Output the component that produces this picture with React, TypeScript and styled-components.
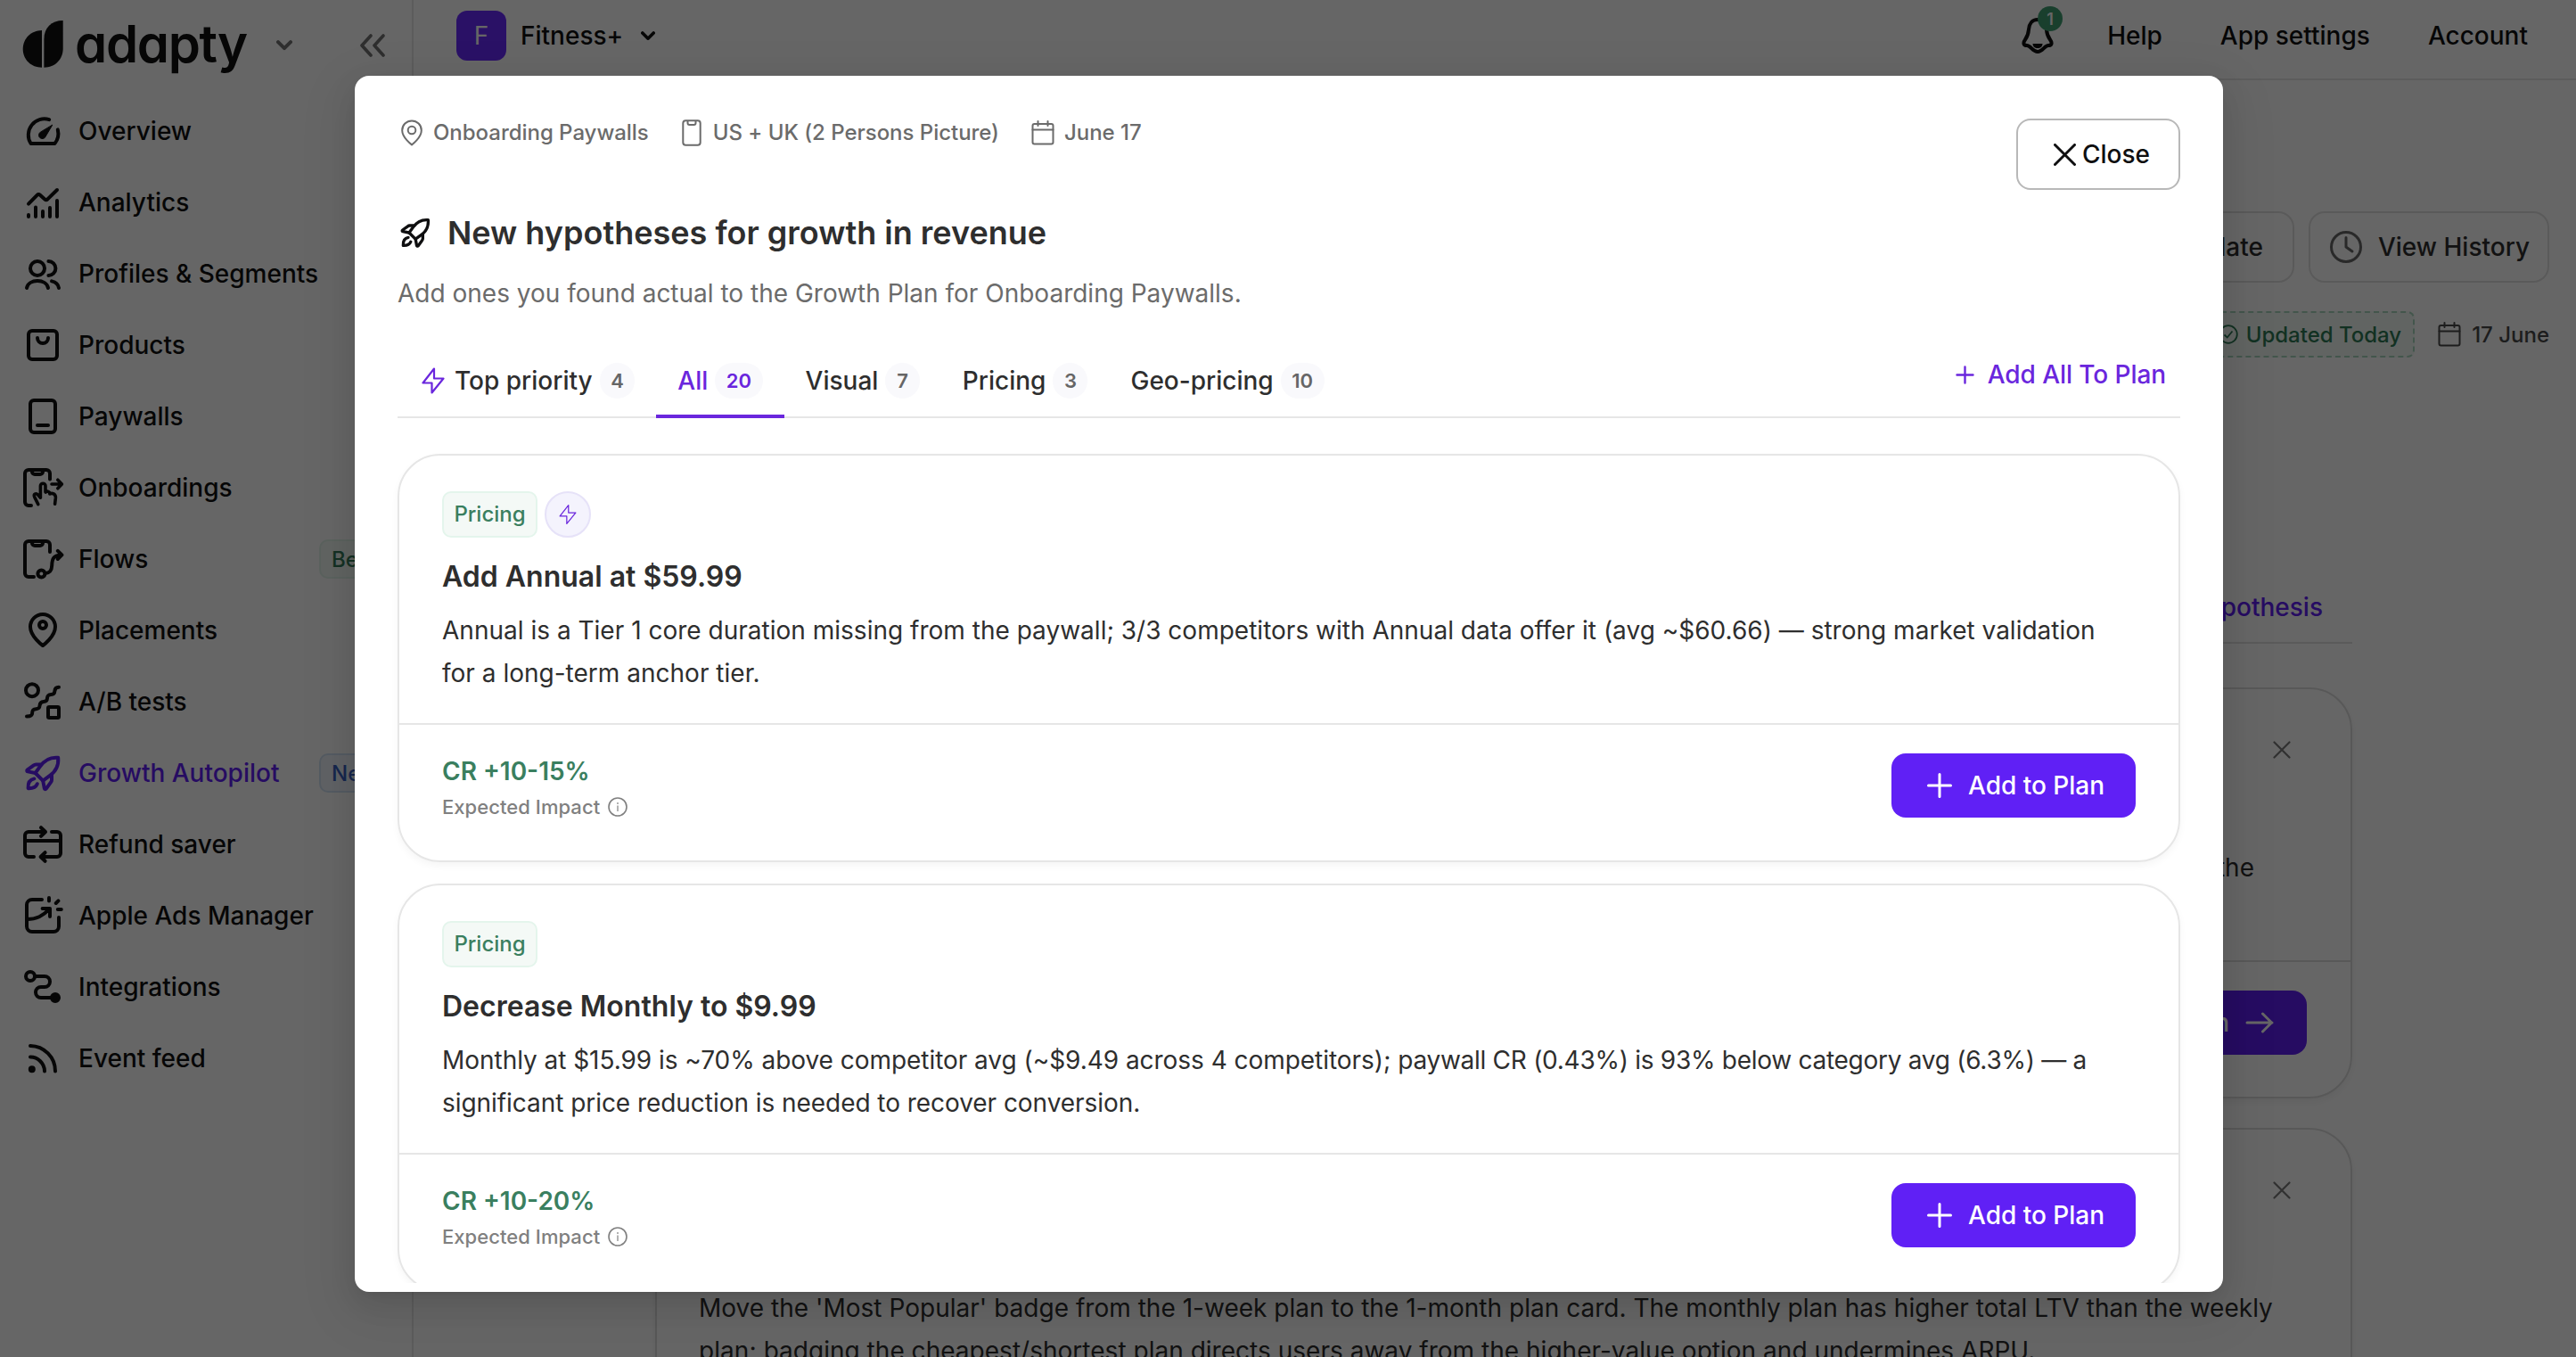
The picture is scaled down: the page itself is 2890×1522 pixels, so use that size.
import React from 'react';
import styled, { createGlobalStyle, css } from 'styled-components';

const GlobalStyle = createGlobalStyle`
  *, *::before, *::after { box-sizing: border-box; }
  html, body { margin: 0; padding: 0; }
  body {
    background: #fff;
    color: #0f0f10;
    font-family: Inter, 'Liberation Sans', sans-serif;
    font-size: 28px;
    font-weight: 500;
    font-optical-sizing: none;
    overflow: hidden;
  }
  button { font: inherit; letter-spacing: inherit; color: inherit; background: none; border: 0; padding: 0; margin: 0; }
  h1, h2, p { margin: 0; }
  svg { display: block; flex: none; }
`;

/* ---------- Icons ---------- */

type GlyphProps = {
  size?: number;
  width?: number;
  children: React.ReactNode;
};

const Glyph = ({ size = 48, width = 2, children }: GlyphProps) => (
  <svg
    width={size}
    height={size}
    viewBox="0 0 24 24"
    fill="none"
    stroke="currentColor"
    strokeWidth={width}
    strokeLinecap="round"
    strokeLinejoin="round"
  >
    {children}
  </svg>
);

const rocket = (
  <>
    <path d="M20.6 3.4C16.4 3 13 4.7 10.5 8.3L7.8 12l4.3 4.3 3.7-2.7c3.6-2.5 5.2-6 4.8-10.2Z" />
    <path d="M10.8 7.2H8.2c-.5 0-1 .2-1.3.5L3.4 10.2c-.5.4-.3.9.2 1L7.8 12" />
    <path d="M17 13.2v2.7c0 .5-.2 1-.5 1.3l-2.6 3.6c-.4.5-.9.3-1-.2l-.8-4.3" />
    <path d="M7.2 15.2c-2.3.4-3.6 2.2-3.4 5.4 2.4.1 4.3-.6 5.1-2.5" />
  </>
);

const phoneNotch = <path d="M6 2.3v.7A1.5 1.5 0 0 0 7.5 4.5h3A1.5 1.5 0 0 0 12 3v-.7" />;

const icons = {
  overview: (
    <>
      <path d="M15.6 5.6A9 9 0 0 0 5.3 19h13.4a9 9 0 0 0 1.7-7.8" />
      <path
        d="M17.3 8.7 13.6 15a2 2 0 1 1-3.1-2.3Z"
        fill="currentColor"
        strokeWidth="0.5"
      />
    </>
  ),
  analytics: (
    <>
      <path d="m4 12.8 4.8-4.9a1.2 1.2 0 0 1 1.7 0l2.6 2.3a1.2 1.2 0 0 0 1.6 0L20 5" />
      <path d="M4 19v1M8 14.8V20M12 17v3M16 15v5M20 11v9" />
    </>
  ),
  profiles: (
    <>
      <circle cx="9" cy="9" r="4" />
      <path d="M15.2 5a4 4 0 0 1 0 8M3 20c.5-2.5 3-4 6-4s5.5 1.5 6 4M17 16.2c2.2.5 3.7 1.8 4 3.8" />
    </>
  ),
  products: (
    <>
      <rect x="4" y="4" width="16" height="16" rx="2" />
      <path d="M9 8a3 3 0 0 0 6 0" />
    </>
  ),
  paywalls: (
    <>
      <rect x="5" y="3" width="14" height="18" rx="2" />
      <path d="M9 17h6" />
    </>
  ),
  onboardings: (
    <>
      {phoneNotch}
      <path d="M5.5 22H4a2 2 0 0 1-2-2V4a2 2 0 0 1 2-2h10a2 2 0 0 1 2 2v3.3" />
      <path d="M17 10h5.4M20.4 7.6l2.3 2.4-2.3 2.4" strokeWidth="1.8" />
      <path
        d="m9.4 21.3-2-4c-.8-1.7.8-2.5 1.9-1.3l1.4 1.6V11a1.4 1.4 0 0 1 2.8 0v3.3M13.5 14.5c1-.8 2.4-.4 2.4 1 1.3-.8 3.4 0 3.3 2.1l-.4 3.5"
        strokeWidth="1.8"
      />
    </>
  ),
  flows: (
    <>
      {phoneNotch}
      <path d="M7 22H4a2 2 0 0 1-2-2V4a2 2 0 0 1 2-2h10a2 2 0 0 1 2 2v4" />
      <circle cx="11.2" cy="20.2" r="2" />
      <path d="M13.4 20c2.8-.3 3.6-1.6 3.7-4.3.1-4 .9-5.6 5-6M20.4 7.4l2.3 2.3-2.3 2.3" />
    </>
  ),
  placements: (
    <>
      <path d="M12 20.5S5 15.5 5 10a7 7 0 0 1 14 0c0 5.5-7 10.5-7 10.5Z" />
      <circle cx="12" cy="9" r="2" />
    </>
  ),
  abTests: (
    <>
      <circle cx="6" cy="5.6" r="3.5" />
      <rect x="15" y="15" width="6" height="6" rx="0.6" />
      <path d="M3 20.2c2.4 0 3.1-.5 3.1-2s.6-2 2.1-2.1 2-.6 2.1-2 .6-2 2.1-2.1 2-.6 2.1-2 .6-1.9 2.1-2 2-.6 2.1-2 .8-2.1 2.3-2.1" />
    </>
  ),
  growth: rocket,
  refund: (
    <>
      <path d="M7 19H4a2 2 0 0 1-2-2V7a2 2 0 0 1 2-2h9.4M11 2.6 13.5 5 11 7.4" />
      <path d="M17 5h3a2 2 0 0 1 2 2v10a2 2 0 0 1-2 2h-9M13.3 16.6 10.8 19l2.5 2.4M2 10h20" />
    </>
  ),
  ads: (
    <>
      <path d="M11.5 3H6a3 3 0 0 0-3 3v12a3 3 0 0 0 3 3h12a3 3 0 0 0 3-3v-5" />
      <path d="M3 14c5.5 0 9-1.8 12.8-5.8M11.8 8H16v4.5M15.5 2v1.7M20.7 3.7l-1.3 1.3M20.4 8.5h2" />
    </>
  ),
  integrations: (
    <>
      <circle cx="5" cy="6" r="2.5" />
      <path d="M7.5 6H13a3 3 0 0 1 0 6h-2a3 3 0 0 0 0 6h6" />
      <circle cx="19" cy="18" r="2" fill="currentColor" />
    </>
  ),
  feed: (
    <>
      <circle cx="5.9" cy="18.1" r="1" fill="currentColor" />
      <path d="M5 11.3a8 8 0 0 1 8 7.9M5 5a14.2 14.2 0 0 1 14 14.2" />
    </>
  ),
};

const Pin = () => (
  <svg width="24" height="30" viewBox="0 0 24 30" fill="none" stroke="currentColor" strokeWidth="2" strokeLinejoin="round">
    <path d="M12 28.4S1.2 20.5 1.2 12.2a10.8 10.8 0 0 1 21.6 0C22.8 20.5 12 28.4 12 28.4Z" />
    <circle cx="12" cy="12" r="4.3" />
  </svg>
);

const Phone = () => (
  <svg width="22" height="30" viewBox="0 0 22 30" fill="none" stroke="currentColor" strokeWidth="2" strokeLinejoin="round">
    <rect x="1.3" y="1.3" width="19.4" height="27.4" rx="3" />
    <path d="M6.5 1.5V4a2 2 0 0 0 2 2h5a2 2 0 0 0 2-2V1.5" />
  </svg>
);

const Calendar = () => (
  <svg width="26" height="28" viewBox="0 0 26 28" fill="none" stroke="currentColor" strokeWidth="2" strokeLinejoin="round" strokeLinecap="round">
    <rect x="1.5" y="4" width="23" height="22.5" rx="2" />
    <path d="M1.5 10.5h23M7.5 1v5M18.5 1v5" />
  </svg>
);

const Bolt = ({ w, h, stroke }: { w: number; h: number; stroke: number }) => (
  <svg width={w} height={h} viewBox="0 0 26 30" fill="none" stroke="currentColor" strokeWidth={stroke} strokeLinejoin="round">
    <path d="M14 1.5 1.5 17.5H11.5L11.5 28.5 24.5 12.5H14Z" />
  </svg>
);

const Plus = ({ size, stroke }: { size: number; stroke: number }) => (
  <svg width={size} height={size} viewBox={`0 0 ${size} ${size}`} fill="none" stroke="currentColor" strokeWidth={stroke} strokeLinecap="round">
    <path d={`M${size / 2} 1.5V${size - 1.5}M1.5 ${size / 2}H${size - 1.5}`} />
  </svg>
);

const Cross = ({ size, stroke }: { size: number; stroke: number }) => (
  <svg width={size} height={size} viewBox={`0 0 ${size} ${size}`} fill="none" stroke="currentColor" strokeWidth={stroke} strokeLinecap="round">
    <path d={`M1.5 1.5 ${size - 1.5} ${size - 1.5}M${size - 1.5} 1.5 1.5 ${size - 1.5}`} />
  </svg>
);

const Chevron = ({ size }: { size: number }) => (
  <svg width={size} height={(size * 12) / 18} viewBox="0 0 18 12" fill="none" stroke="currentColor" strokeWidth="4" strokeLinecap="round" strokeLinejoin="round">
    <path d="m2 2.2 7 7 7-7" />
  </svg>
);

const Info = () => (
  <svg width="22" height="22" viewBox="0 0 22 22" fill="none" stroke="currentColor" strokeWidth="1.6">
    <circle cx="11" cy="11" r="10" />
    <path d="M11 9.5v6.5M11 6v2" strokeWidth="1.2" />
  </svg>
);

/* ---------- Page shell ---------- */

const Page = styled.div`
  display: flex;
  width: 2890px;
  height: 1522px;
  overflow: hidden;
  position: relative;
`;

const Sidebar = styled.aside`
  width: 464px;
  flex: none;
  border-right: 2px solid #e6e6e6;
  display: flex;
  flex-direction: column;
`;

const Brand = styled.div`
  height: 107px;
  padding: 0 29px 6px 24px;
  display: flex;
  align-items: center;
  color: #737373;
`;

const Wordmark = styled.span`
  margin-left: 12px;
  margin-top: -3px;
  width: 193px;
  font-size: 58px;
  line-height: 70px;
  font-weight: 600;
  letter-spacing: -1.3px;
  font-feature-settings: 'cv11' 1;
  color: #0f0f10;
  white-space: nowrap;
`;

const BrandChevron = styled.span`
  margin-left: 33px;
`;

const Collapse = styled.span`
  margin-left: auto;
`;

const NavItem = styled.a<{ $active?: boolean }>`
  height: 80px;
  padding-left: 24px;
  display: flex;
  align-items: center;
  white-space: nowrap;
  color: ${(p) => (p.$active ? '#5f20f4' : '#0f0f10')};
`;

const NavLabel = styled.span`
  margin-left: 16px;
  width: 270px;
`;

const NavBadge = styled.span<{ $tone: 'green' | 'blue' }>`
  height: 44px;
  padding: 0 12px;
  display: flex;
  align-items: center;
  border: 2px solid;
  border-radius: 10px;
  font-size: 24px;
  ${(p) =>
    p.$tone === 'green'
      ? css`
          color: #357c5a;
          background: #f2faf6;
          border-color: #e3f4ea;
        `
      : css`
          color: #3a62c4;
          background: #f0f6fd;
          border-color: #d3e4f5;
        `}
`;

const Main = styled.div`
  flex: 1;
  min-width: 0;
  display: flex;
  flex-direction: column;
`;

const TopBar = styled.header`
  height: 90px;
  flex: none;
  padding: 0 54px 8px 48px;
  border-bottom: 2px solid #e6e6e6;
  display: flex;
  align-items: center;
`;

const AppMark = styled.span`
  width: 56px;
  height: 56px;
  border-radius: 12px;
  background: #6a2bff;
  color: #fff;
  display: flex;
  align-items: center;
  justify-content: center;
  font-weight: 400;
`;

const AppName = styled.span`
  margin: 0 20px 0 16px;
`;

const TopLinks = styled.nav`
  margin-left: auto;
  display: flex;
  align-items: center;
  gap: 65px;
`;

const Bell = styled.span`
  position: relative;
  margin-right: -7px;
`;

const BellCount = styled.span`
  position: absolute;
  left: 20px;
  top: -11px;
  width: 28px;
  height: 28px;
  border-radius: 50%;
  background: #3f9e72;
  color: #fff;
  font-size: 18px;
  font-weight: 600;
  display: flex;
  align-items: center;
  justify-content: center;
`;

const Actions = styled.div`
  margin: 147px 30px 0 0;
  display: flex;
  justify-content: flex-end;
  gap: 16px;
`;

const GhostButton = styled.button`
  height: 80px;
  padding: 0 20px 0 21px;
  border: 2px solid #e2e2e2;
  border-radius: 18px;
  display: flex;
  align-items: center;
  gap: 17px;
  color: #2e2e2e;
`;

const ClockSlot = styled.span`
  color: #666;
`;

const UpdateButton = styled(GhostButton)`
  padding: 0 33px;
`;

const StatusRow = styled.div`
  margin: 32px 30px 0 0;
  height: 52px;
  display: flex;
  justify-content: flex-end;
  align-items: center;
  font-size: 24px;
`;

const FreshBadge = styled.span`
  height: 52px;
  padding: 0 13px;
  border: 2px dashed #a9d6bf;
  border-radius: 8px;
  background: #f2faf6;
  color: #2f7a56;
  display: flex;
  align-items: center;
  gap: 9px;
`;

const DateNote = styled.span`
  margin-left: 26px;
  display: flex;
  align-items: center;
  gap: 12px;
  color: #4a4a4a;
`;

const PlanColumn = styled.section`
  margin: 239px 0 0 271px;
  width: 1904px;
  display: flex;
  flex-direction: column;
`;

const PlanBar = styled.div`
  height: 82px;
  padding: 0 33px 0 0;
  border-bottom: 2px solid #e2e2e2;
  display: flex;
  justify-content: flex-end;
  color: #5f20f4;
  line-height: 82px;
`;

const PlanCard = styled.article`
  margin-top: 49px;
  height: 461px;
  flex: none;
  border: 2px solid #dddddd;
  border-radius: 48px;
  box-shadow: 0 4px 8px rgba(0, 0, 0, 0.05);

  & + & { margin-top: 33px; }
`;

const PlanBody = styled.div`
  height: 306px;
  border-bottom: 2px solid #dddddd;
  padding: 57px 67px 0 47px;
`;

const Dismiss = styled.div`
  height: 120px;
  padding-top: 1px;
  display: flex;
  justify-content: flex-end;
  color: #7a7a7a;
`;

const PlanText = styled.p<{ $right?: boolean }>`
  font-weight: 400;
  line-height: 47.5px;
  letter-spacing: 0.02px;
  white-space: pre;
  color: #2e2e2e;
  text-align: ${(p) => (p.$right ? 'right' : 'left')};
  padding-right: ${(p) => (p.$right ? '41px' : '0')};
`;

const PlanFooter = styled.div`
  padding: 32px 49px 0;
  display: flex;
  justify-content: flex-end;
`;

const PrimaryButton = styled.button`
  height: 72px;
  padding: 0 37px 0 40px;
  border-radius: 16px;
  background: #6020f5;
  color: #fff;
  display: flex;
  align-items: center;
  gap: 18px;
  white-space: nowrap;
`;

/* ---------- Modal ---------- */

const Overlay = styled.div`
  position: absolute;
  inset: 0;
  padding: 85px 396px 73px 398px;
  background: rgba(0, 0, 0, 0.6);
  display: flex;
`;

const Dialog = styled.div`
  flex: 1;
  min-width: 0;
  padding: 48px 48px 10px;
  border-radius: 16px;
  background: #fff;
  box-shadow: 0 12px 32px rgba(0, 0, 0, 0.09), 0 6px 12px -8px rgba(0, 0, 0, 0.12),
    0 18px 56px 16px rgba(0, 0, 0, 0.06);
  display: flex;
  flex-direction: column;
`;

const DialogTop = styled.div`
  display: flex;
  justify-content: space-between;
  align-items: flex-start;
  height: 80px;
`;

const MetaList = styled.div`
  height: 31px;
  display: flex;
  align-items: center;
  color: #6b6b6b;
  font-size: 24px;
  letter-spacing: -0.03px;
`;

const MetaItem = styled.span<{ $gap: number; $lead: number }>`
  display: flex;
  align-items: center;
  gap: ${(p) => p.$gap}px;
  margin-left: ${(p) => p.$lead}px;
  white-space: nowrap;
`;

const CloseButton = styled.button`
  width: 184px;
  height: 80px;
  border: 2px solid #b8b8b8;
  border-radius: 16px;
  padding-left: 40px;
  display: flex;
  align-items: center;
  gap: 7px;
`;

const Heading = styled.h1`
  margin-top: 24px;
  height: 48px;
  display: flex;
  align-items: center;
  gap: 16px;
  font-size: 36px;
  font-weight: 600;
  color: #2e2e2e;
  svg { color: #0f0f10; }
`;

const Sub = styled.p`
  margin-top: 24px;
  height: 40px;
  line-height: 40px;
  font-weight: 400;
  color: #6b6b6b;
`;

const TabBar = styled.div`
  margin-top: 36px;
  height: 84px;
  flex: none;
  border-bottom: 2px solid #e6e6e6;
  display: flex;
  align-items: stretch;
  color: #2e2e2e;
`;

const Tab = styled.button<{ $active?: boolean }>`
  padding: 4px 24px 0;
  margin-bottom: -2px;
  border-bottom: 4px solid ${(p) => (p.$active ? '#6a26dd' : 'transparent')};
  color: ${(p) => (p.$active ? '#6a26dd' : '#2e2e2e')};
  display: flex;
  align-items: center;
  gap: 8px;
  white-space: nowrap;
`;

const Count = styled.span<{ $active?: boolean }>`
  height: 40px;
  min-width: 38.5px;
  padding: 0 12.5px;
  border-radius: 20px;
  background: #f9f9fc;
  color: ${(p) => (p.$active ? '#6a26dd' : '#666')};
  font-size: 22px;
  font-weight: 600;
  display: flex;
  align-items: center;
  justify-content: center;
`;

const BoltSlot = styled.span`
  color: #6a26dd;
  margin: 0 3px;
`;

const AddAll = styled.button`
  margin-left: auto;
  padding: 0 16px 12px 0;
  display: flex;
  align-items: center;
  gap: 15px;
  letter-spacing: -0.08px;
  color: #6a26dd;
`;

const Scroller = styled.div`
  flex: 1;
  min-height: 0;
  margin: 0 -16px;
  padding: 40px 16px 0;
  overflow: hidden;
  display: flex;
  flex-direction: column;
  gap: 24px;
`;

const Card = styled.article`
  height: 458px;
  flex: none;
  border: 2px solid #e6e6e6;
  border-radius: 48px;
  box-shadow: 0 4px 8px rgba(0, 0, 0, 0.04);
`;

const CardBody = styled.div`
  height: 302px;
  padding: 40px 48px 0;
  border-bottom: 2px solid #e6e6e6;
`;

const Tags = styled.div`
  display: flex;
  gap: 8px;
`;

const Tag = styled.span`
  width: 107px;
  height: 52px;
  padding-bottom: 1px;
  border: 2px solid #e4f5ec;
  border-radius: 10px;
  background: #f4f9f6;
  color: #3a7f5f;
  font-size: 24px;
  display: flex;
  align-items: center;
  justify-content: center;
`;

const PriorityMark = styled.span`
  width: 52px;
  height: 52px;
  border: 2px solid #e6e2f8;
  border-radius: 50%;
  background: #f4f3fd;
  color: #6a26dd;
  display: flex;
  align-items: center;
  justify-content: center;
`;

const CardTitle = styled.h2`
  margin-top: 20px;
  font-size: 32px;
  line-height: 48px;
  font-weight: 600;
  color: #2e2e2e;
`;

const CardText = styled.p`
  margin-top: 12px;
  font-weight: 400;
  line-height: 48px;
  color: #2e2e2e;
  white-space: pre;
`;

const Run = styled.span<{ $tracking: number }>`
  letter-spacing: ${(p) => p.$tracking}px;
`;

const CardFooter = styled.div`
  padding: 32px 48px 0;
  display: flex;
  justify-content: space-between;
  align-items: flex-start;
`;

const Impact = styled.div`
  color: #3a7f5f;
  font-weight: 600;
  line-height: 40px;
`;

const ImpactLabel = styled.div`
  height: 40px;
  display: flex;
  align-items: center;
  gap: 9px;
  font-size: 22px;
  letter-spacing: 0.05px;
  font-weight: 500;
  color: #808080;
`;

const AddButton = styled(PrimaryButton)`
  width: 274px;
`;

/* ---------- Data ---------- */

type NavEntry = {
  label: string;
  icon: keyof typeof icons;
  badge?: { text: string; tone: 'green' | 'blue' };
  active?: boolean;
};

const nav: NavEntry[] = [
  { label: 'Overview', icon: 'overview' },
  { label: 'Analytics', icon: 'analytics' },
  { label: 'Profiles & Segments', icon: 'profiles' },
  { label: 'Products', icon: 'products' },
  { label: 'Paywalls', icon: 'paywalls' },
  { label: 'Onboardings', icon: 'onboardings' },
  { label: 'Flows', icon: 'flows', badge: { text: 'Beta', tone: 'green' } },
  { label: 'Placements', icon: 'placements' },
  { label: 'A/B tests', icon: 'abTests' },
  { label: 'Growth Autopilot', icon: 'growth', badge: { text: 'New', tone: 'blue' }, active: true },
  { label: 'Refund saver', icon: 'refund' },
  { label: 'Apple Ads Manager', icon: 'ads' },
  { label: 'Integrations', icon: 'integrations' },
  { label: 'Event feed', icon: 'feed' },
];

const tabs = [
  { label: 'Top priority', count: 4, bolt: true },
  { label: 'All', count: 20, active: true },
  { label: 'Visual', count: 7 },
  { label: 'Pricing', count: 3 },
  { label: 'Geo-pricing', count: 10 },
];

const hypotheses = [
  {
    title: 'Add Annual at $59.99',
    runs: [
      {
        text: 'Annual is a Tier 1 core duration missing from the paywall; 3/3 competitors with Annual data offer it (avg ~$60.66) — strong market validation\nfor a long-term anchor tier.',
        tracking: 0.01,
      },
    ],
    impact: 'CR +10-15%',
    priority: true,
  },
  {
    title: 'Decrease Monthly to $9.99',
    runs: [
      {
        text: 'Monthly at $15.99 is ~70% above competitor avg (~$9.49 across 4 competitors); ',
        tracking: -0.04,
      },
      { text: 'paywall CR (0.43%) is 93% below category avg (6.3%) — a\n', tracking: -0.27 },
      { text: 'significant price reduction is needed to recover conversion.', tracking: -0.05 },
    ],
    impact: 'CR +10-20%',
    priority: false,
  },
];

/* ---------- Sections ---------- */

const SidebarPanel = () => (
  <Sidebar>
    <Brand>
      <svg width="48" height="56" viewBox="24 19 48 56" fill="#0f0f10">
        <path d="M47 30v41.7C35 71.7 25.7 63 25.7 51S35 30.3 47 30Z" />
        <path d="M70.7 19v31.5c0 12-9 21.2-21.3 21.2V40C49.4 27 57.5 19 70.7 19Z" />
      </svg>
      <Wordmark>adapty</Wordmark>
      <BrandChevron>
        <Chevron size={18} />
      </BrandChevron>
      <Collapse>
        <svg width="30" height="26" viewBox="0 0 30 26" fill="none" stroke="currentColor" strokeWidth="3.6" strokeLinecap="round" strokeLinejoin="round">
          <path d="M13 2 3 13l10 11M27 2 17 13l10 11" />
        </svg>
      </Collapse>
    </Brand>
    {nav.map((n) => (
      <NavItem key={n.label} $active={n.active}>
        <Glyph>{icons[n.icon]}</Glyph>
        <NavLabel>{n.label}</NavLabel>
        {n.badge && <NavBadge $tone={n.badge.tone}>{n.badge.text}</NavBadge>}
      </NavItem>
    ))}
  </Sidebar>
);

const MainPanel = () => (
  <Main>
    <TopBar>
      <AppMark>F</AppMark>
      <AppName>Fitness+</AppName>
      <Chevron size={16} />
      <TopLinks>
        <Bell>
          <svg width="40" height="44" viewBox="0 0 40 44" fill="none" stroke="currentColor" strokeWidth="4" strokeLinejoin="round">
            <path d="M20 4c-6 0-9.5 4.5-10 11-.4 6-1.5 8-4 11.5-2.6 3.6-2 6.5 2 6.5 4.5 0 6 7 12 7s7.5-7 12-7c4 0 4.6-2.9 2-6.5-2.5-3.5-3.6-5.5-4-11C29.5 8.5 26 4 20 4Z" />
            <path d="M14.5 31h11c0 3-2.2 5-5.5 5s-5.5-2-5.5-5Z" fill="currentColor" stroke="none" />
          </svg>
          <BellCount>1</BellCount>
        </Bell>
        <span>Help</span>
        <span>App settings</span>
        <span>Account</span>
      </TopLinks>
    </TopBar>
    <Actions>
      <UpdateButton>Update</UpdateButton>
      <GhostButton>
        <ClockSlot>
          <svg width="38" height="38" viewBox="0 0 38 38" fill="none" stroke="currentColor" strokeWidth="3" strokeLinecap="round" strokeLinejoin="round">
            <circle cx="19" cy="19" r="16.5" />
            <path d="M19 8.5V19l7 5" />
          </svg>
        </ClockSlot>
        View History
      </GhostButton>
    </Actions>
    <StatusRow>
      <FreshBadge>
        <svg width="22" height="22" viewBox="0 0 22 22" fill="none" stroke="currentColor" strokeWidth="1.8">
          <circle cx="11" cy="11" r="9.8" />
          <path d="m6.5 11.5 3.2 3 5.8-7" />
        </svg>
        Updated Today
      </FreshBadge>
      <DateNote>
        <Calendar />
        17 June
      </DateNote>
    </StatusRow>
    <PlanColumn>
      <PlanBar>Add hypothesis</PlanBar>
      <PlanCard>
        <PlanBody>
          <Dismiss>
            <Cross size={20} stroke={2.2} />
          </Dismiss>
          <PlanText $right>the</PlanText>
        </PlanBody>
        <PlanFooter>
          <PrimaryButton>
            Plan
            <svg width="32" height="26" viewBox="0 0 32 26" fill="none" stroke="currentColor" strokeWidth="3" strokeLinecap="round" strokeLinejoin="round">
              <path d="M2 13h28M19.5 3l10 10-10 10" />
            </svg>
          </PrimaryButton>
        </PlanFooter>
      </PlanCard>
      <PlanCard>
        <PlanBody>
          <Dismiss>
            <Cross size={20} stroke={2.2} />
          </Dismiss>
          <PlanText>
            {
              "Move the 'Most Popular' badge from the 1-week plan to the 1-month plan card. The monthly plan has higher total LTV than the weekly\nplan; badging the cheapest/shortest plan directs users away from the higher-value option and undermines ARPU."
            }
          </PlanText>
        </PlanBody>
      </PlanCard>
    </PlanColumn>
  </Main>
);

const HypothesesDialog = () => (
  <Overlay>
    <Dialog role="dialog">
      <DialogTop>
        <MetaList>
          <MetaItem $gap={12} $lead={4}>
            <Pin />
            Onboarding Paywalls
          </MetaItem>
          <MetaItem $gap={13} $lead={37}>
            <Phone />
            US + UK (2 Persons Picture)
          </MetaItem>
          <MetaItem $gap={11} $lead={36}>
            <Calendar />
            June 17
          </MetaItem>
        </MetaList>
        <CloseButton>
          <Cross size={25} stroke={3} />
          Close
        </CloseButton>
      </DialogTop>
      <Heading>
        <Glyph size={40} width={2}>
          {rocket}
        </Glyph>
        New hypotheses for growth in revenue
      </Heading>
      <Sub>Add ones you found actual to the Growth Plan for Onboarding Paywalls.</Sub>
      <TabBar>
        {tabs.map((t) => (
          <Tab key={t.label} $active={t.active}>
            {t.bolt && (
              <BoltSlot>
                <Bolt w={26} h={30} stroke={2.2} />
              </BoltSlot>
            )}
            {t.label}
            <Count $active={t.active}>{t.count}</Count>
          </Tab>
        ))}
        <AddAll>
          <Plus size={21} stroke={2.4} />
          Add All To Plan
        </AddAll>
      </TabBar>
      <Scroller>
        {hypotheses.map((h) => (
          <Card key={h.title}>
            <CardBody>
              <Tags>
                <Tag>Pricing</Tag>
                {h.priority && (
                  <PriorityMark>
                    <Bolt w={20} h={24} stroke={1.6} />
                  </PriorityMark>
                )}
              </Tags>
              <CardTitle>{h.title}</CardTitle>
              <CardText>
                {h.runs.map((r) => (
                  <Run key={r.text} $tracking={r.tracking}>
                    {r.text}
                  </Run>
                ))}
              </CardText>
            </CardBody>
            <CardFooter>
              <div>
                <Impact>{h.impact}</Impact>
                <ImpactLabel>
                  Expected Impact
                  <Info />
                </ImpactLabel>
              </div>
              <AddButton>
                <Plus size={28} stroke={3} />
                Add to Plan
              </AddButton>
            </CardFooter>
          </Card>
        ))}
      </Scroller>
    </Dialog>
  </Overlay>
);

export default function App() {
  return (
    <Page>
      <GlobalStyle />
      <SidebarPanel />
      <MainPanel />
      <HypothesesDialog />
    </Page>
  );
}
